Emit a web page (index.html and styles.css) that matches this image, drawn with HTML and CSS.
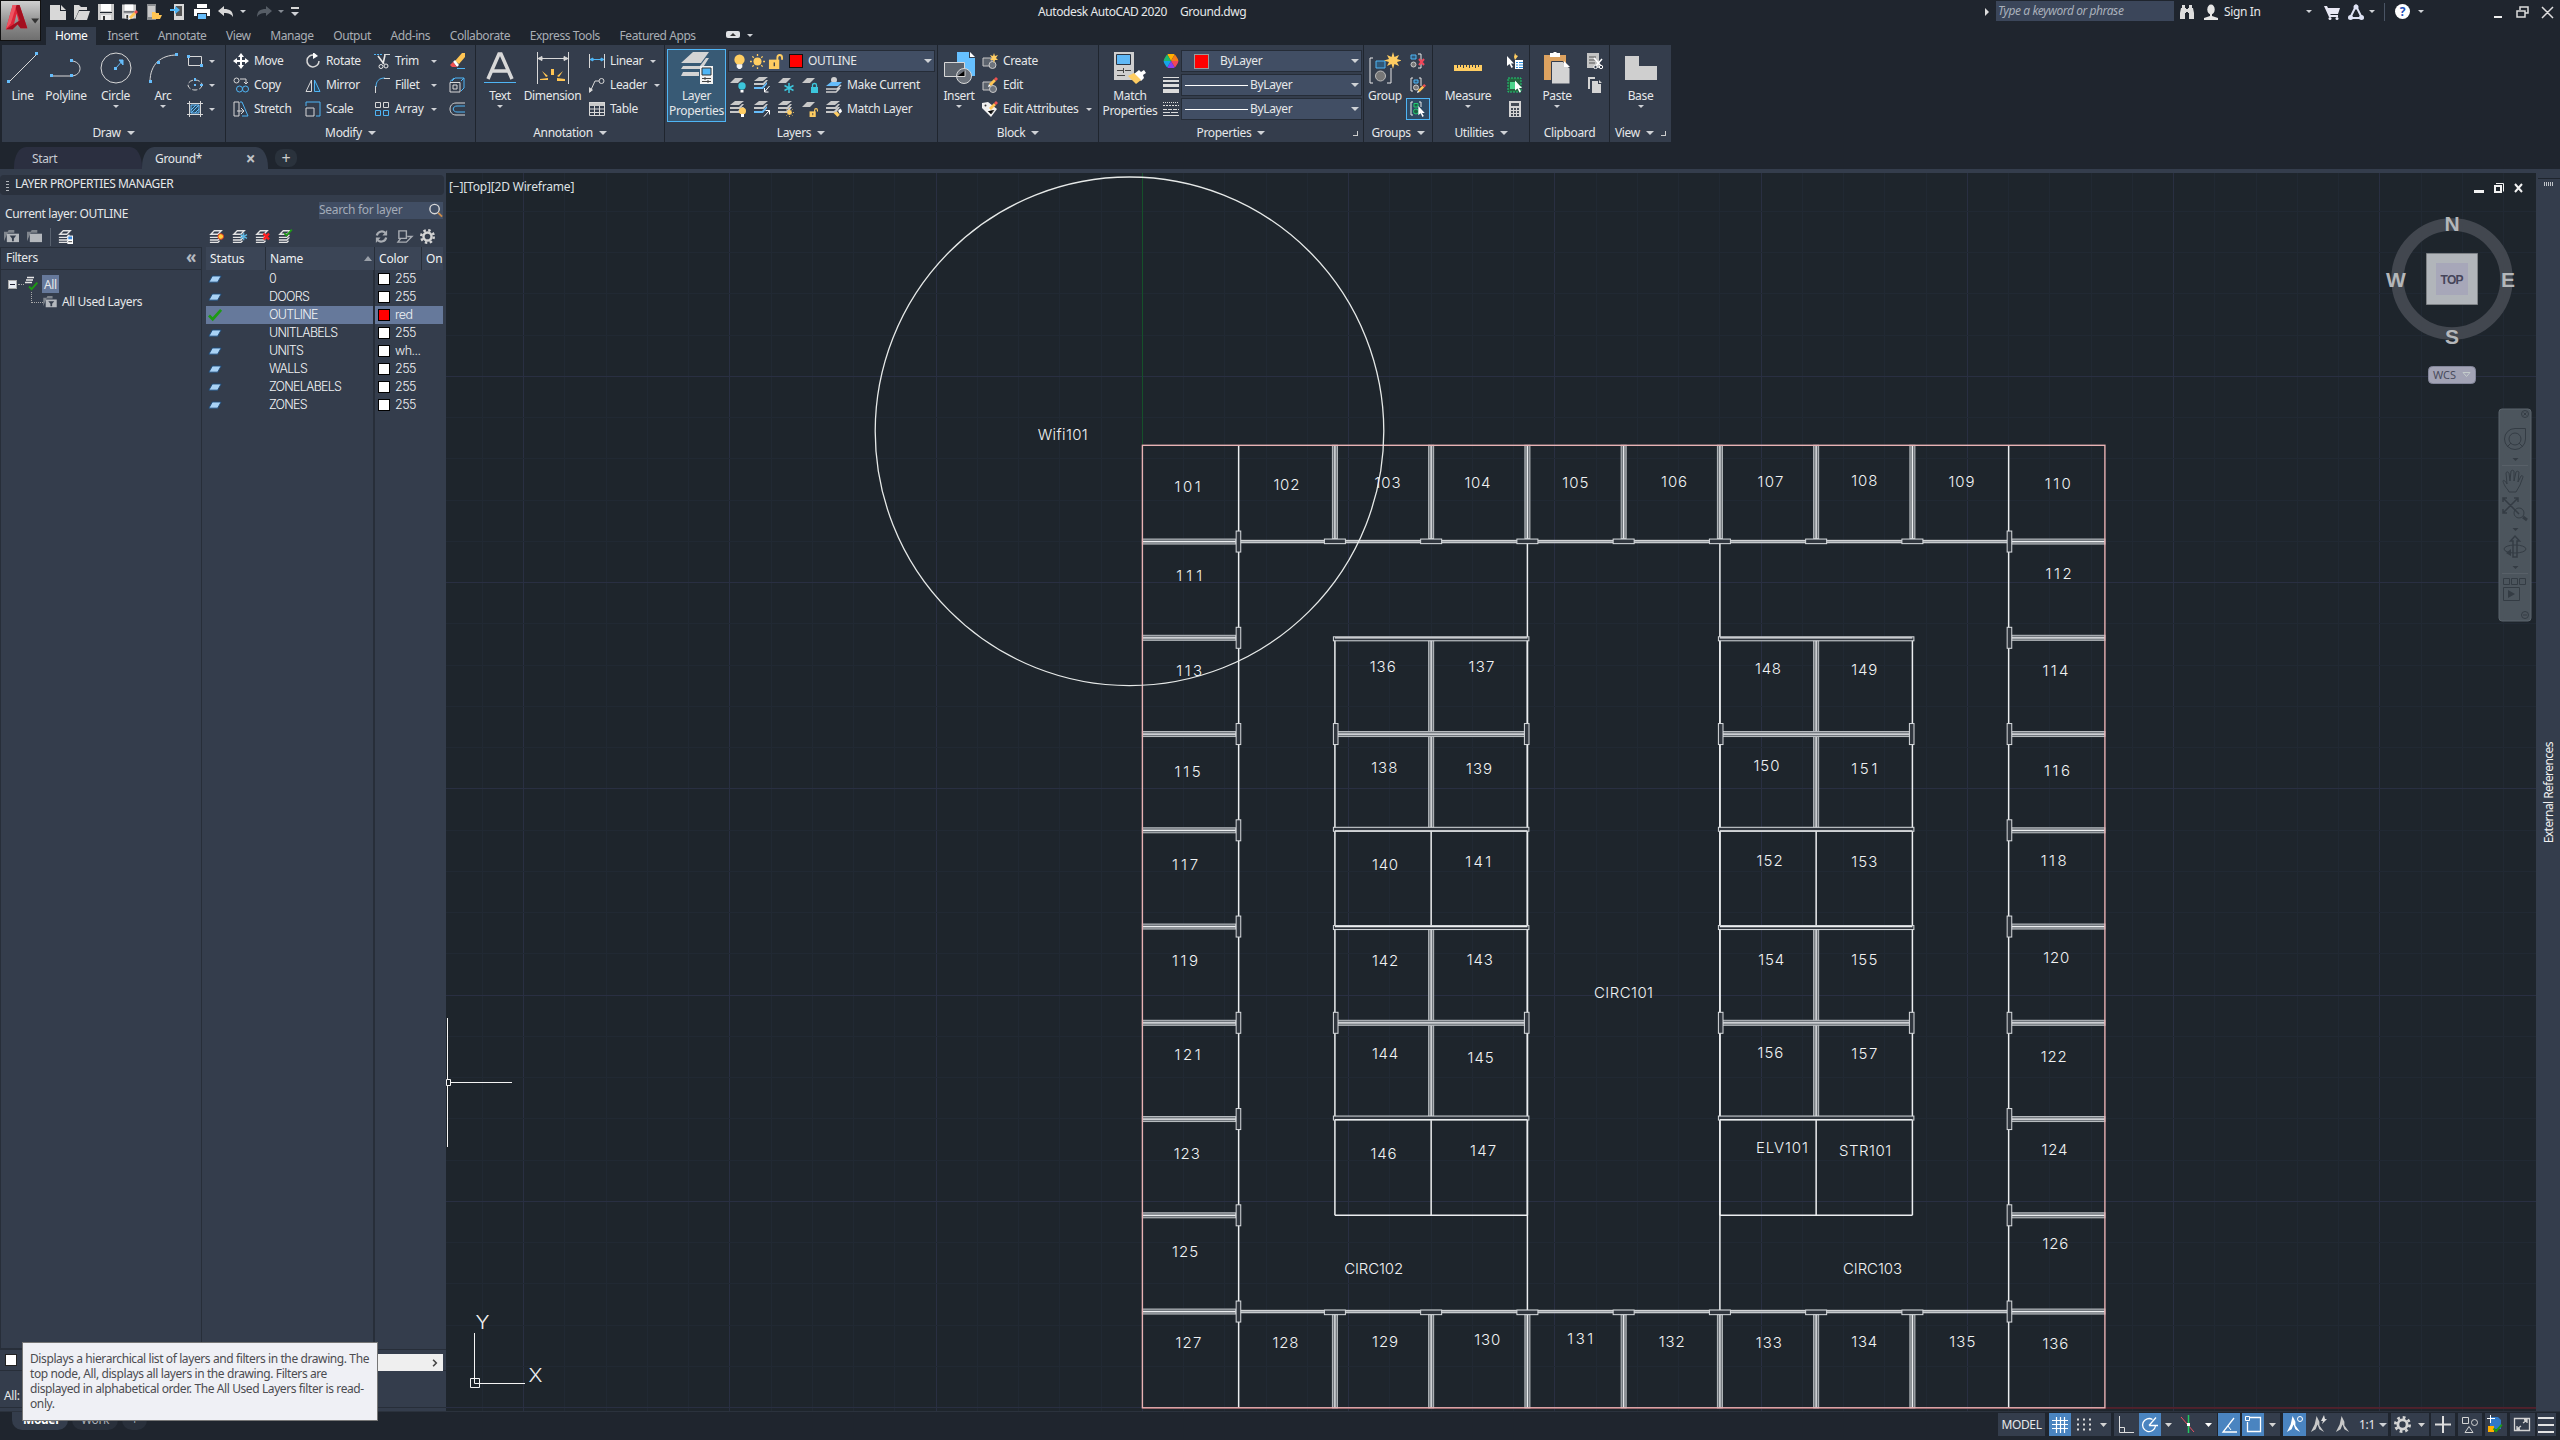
FILE: index.html
```html
<!DOCTYPE html>
<html lang="en">
<head>
<meta charset="utf-8">
<title>Autodesk AutoCAD 2020 - Ground.dwg</title>
<link rel="stylesheet" href="styles.css">
</head>
<body>
<svg class="sprite" aria-hidden="true">
  <symbol id="new" viewBox="0 0 16 16"><path fill="#d8d8d8" d="M0 1h10v6h6v9H0zM11 1l5 5h-5z"/></symbol>
  <symbol id="open" viewBox="0 0 16 16"><path fill="#d8d8d8" d="M0 16V1h5l2 2h6v3H5L2 13zM5 7h11l-3 9H1z"/></symbol>
  <symbol id="save" viewBox="0 0 16 16"><path fill="#c9c9c9" d="M0 0h16v16H0z"/><path fill="#fff" d="M3 0h10v7H3z"/><path fill="#1f252e" d="M2 8h12v1H2z"/><path fill="#eee" d="M3 11h10v5H3z"/><path fill="#333" d="M5 12h2v4H5z"/></symbol>
  <symbol id="pencil" viewBox="0 0 10 10"><path fill="#fff" d="M0 10l1-3 2 2z"/><path fill="#ffc553" d="M1 7l5-5 2 2-5 5z"/><path fill="#f05050" d="M6 2l2-2 2 2-2 2z"/></symbol>
  <symbol id="saveas" viewBox="0 0 16 16"><use href="#save" width="14" height="15"/><use href="#pencil" x="6" y="6" width="10" height="10"/></symbol>
  <symbol id="phoneopen" viewBox="0 0 16 16"><path fill="#8a8d90" d="M1 0h9v16H1z"/><path fill="#c9c9c9" d="M2 2h7v11H2z"/><path fill="#ffc553" d="M6 15V8h3l1 1h3v2h3l-2 4z"/></symbol>
  <symbol id="phonesave" viewBox="0 0 16 16"><path fill="#d8d8d8" d="M4 0h10v16H4z"/><path fill="#555" d="M6 2h6v10H6z"/><path fill="#4fb5f5" d="M0 5h5V2l5 4-5 4V7H0z"/></symbol>
  <symbol id="print" viewBox="0 0 16 16"><path fill="#fff" d="M3 0h10v4H3zM0 5h16v7h-3V9H3v3H0z"/><path fill="#66bdfb" d="M4 10h8v5H4z"/></symbol>
  <symbol id="undo" viewBox="0 0 16 16"><path d="M0 7l6-5v3c6 0 9 2 9 8-2-3-4-4-9-4v3z"/></symbol>
  <symbol id="line" viewBox="0 0 32 32"><path stroke="#d8d8d8" fill="none" d="M2 30L30 2"/><path fill="#66bdfb" d="M0 28h3v3H0zM28 0h3v3h-3z"/></symbol>
  <symbol id="pline" viewBox="0 0 32 32"><path stroke="#d8d8d8" fill="none" d="M1 24h20c12 0 12-15 0-15"/><path fill="#66bdfb" d="M0 22h3v3H0zM20 22h3v3h-3zM20 7h3v3h-3z"/></symbol>
  <symbol id="circle" viewBox="0 0 32 32"><circle cx="16" cy="16" r="15" stroke="#d8d8d8" fill="none"/><path stroke="#66bdfb" fill="#66bdfb" d="M16 16l7-8m-4 0h4v5z"/><path fill="#66bdfb" d="M14 15h3v3h-3z"/></symbol>
  <symbol id="arc" viewBox="0 0 32 32"><path stroke="#d8d8d8" fill="none" d="M3 30C3 12 14 3 30 3"/><path fill="#66bdfb" d="M2 28h3v3H2zM10 9h3v3h-3zM28 1h3v3h-3z"/></symbol>
  <symbol id="rect" viewBox="0 0 16 16"><path stroke="#d8d8d8" fill="none" d="M1.500 3.500h13v9h-13z"/><path fill="#66bdfb" d="M0 2h3v3H0zM13 11h3v3h-3z"/></symbol>
  <symbol id="ellipse" viewBox="0 0 16 16"><ellipse cx="8" cy="8" rx="7" ry="5" stroke="#d8d8d8" stroke-dasharray="5 2" fill="none"/><path fill="#66bdfb" d="M7 7h2v2H7zM7 1h2v3H7zM13 7h3v2h-3z"/></symbol>
  <symbol id="hatch" viewBox="0 0 16 16"><path fill="#294c66" stroke="#66bdfb" d="M4 4h8v8H4zM4 9l5-5M4 12l8-8M8 12l4-4"/><path stroke="#d8d8d8" fill="none" d="M0 2.500h16M0 13.500h16M2.500 0v16M13.500 0v16"/></symbol>
  <symbol id="move" viewBox="0 0 16 16"><path fill="#fff" d="M8 0l3 4H9v3h3V5l4 3-4 3V9H9v3h2l-3 4-3-4h2V9H4v2L0 8l4-3v2h3V4H5z"/></symbol>
  <symbol id="copy" viewBox="0 0 16 16"><g fill="none"><circle cx="3.500" cy="3.500" r="2.500" stroke="#d8d8d8"/><path stroke="#d8d8d8" d="M7 2h6v5m-2-2l2 2 2-2"/><g stroke="#4fb5f5"><circle cx="6.500" cy="12" r="3"/><circle cx="12.500" cy="12" r="3"/></g></g></symbol>
  <symbol id="stretch" viewBox="0 0 16 16"><path stroke="#d8d8d8" fill="none" d="M1 1h5v14H1zM4 10h7m-3-3l3 3-3 3"/><path stroke="#4fb5f5" fill="none" d="M7 1h2l6 14H9"/></symbol>
  <symbol id="rotate" viewBox="0 0 16 16"><path stroke="#d8d8d8" stroke-width="1.500" fill="none" d="M14 8a6 6 0 1 1-5-6"/><path fill="#fff" d="M8-1l5 4-5 3z"/></symbol>
  <symbol id="mirror" viewBox="0 0 16 16"><path stroke="#d8d8d8" fill="none" d="M6.500 3v11.500H1z"/><path stroke="#4fb5f5" fill="#294c66" d="M9.500 3v11.500H15z"/></symbol>
  <symbol id="scale" viewBox="0 0 16 16"><path stroke="#d8d8d8" fill="none" d="M1 7h8v8H1z"/><path stroke="#4fb5f5" fill="none" d="M3 1h12v14h-4M1 5V1h2"/></symbol>
  <symbol id="trim" viewBox="0 0 16 16"><path stroke="#4fb5f5" stroke-dasharray="2 1" d="M0 1.500h8"/><path stroke="#d8d8d8" d="M10 1.500h6"/><path stroke="#e8e8e8" stroke-width="1.600" fill="none" d="M4 3l6 8M11 2L9 11"/><g stroke="#e8e8e8" fill="none"><circle cx="7" cy="13.500" r="2"/><circle cx="12" cy="13" r="2"/></g></symbol>
  <symbol id="fillet" viewBox="0 0 16 16"><path stroke="#4fb5f5" fill="none" d="M2 10C2 4 5 1 11 1"/><path stroke="#d8d8d8" fill="none" d="M1.500 9v7M10 1.500h6"/></symbol>
  <symbol id="array" viewBox="0 0 16 16"><g fill="none"><path stroke="#d8d8d8" d="M1.500 1.500h5v5h-5zM9.500 1.500h5v5h-5z"/><path stroke="#4fb5f5" d="M1.500 9.500h5v5h-5zM9.500 9.500h5v5h-5z"/></g></symbol>
  <symbol id="erase" viewBox="0 0 16 16"><path fill="#ffc553" d="M6 8l7-8h3v4l-6 7z"/><path fill="#fff" d="M4 9l2-2 4 5-2 2z"/><path fill="#f05050" d="M1 12l3-3 4 5H3z"/><path stroke="#4fb5f5" d="M8 15.500h8"/></symbol>
  <symbol id="explode" viewBox="0 0 16 16"><path stroke="#4fb5f5" fill="none" d="M3 4l3-3h9v10l-3 3M1 4.500l4-3.500M12 4l3-3"/><path stroke="#d8d8d8" fill="none" d="M1 5.500h10v9.500H1zM4 8h4v4H4z"/></symbol>
  <symbol id="offset" viewBox="0 0 16 16"><path stroke="#d8d8d8" fill="none" d="M16 2H7C-1 2-1 14 7 14h9"/><path stroke="#4fb5f5" fill="none" d="M16 5H8c-5 0-5 6 0 6h8"/></symbol>
  <symbol id="text" viewBox="0 0 32 32"><path fill="none" stroke="#d8d8d8" stroke-width="3.500" d="M4 27L15 2h2l11 25M8 19h16"/><path stroke="#4fb5f5" d="M0 30.500h32"/></symbol>
  <symbol id="dim" viewBox="0 0 32 32"><path stroke="#d8d8d8" fill="#d8d8d8" d="M.5 0v32M31.500 0v32M1 6.500h30M1 6.500l4-2v4zM31 6.500l-4-2v4z"/><path fill="#ffc553" d="M14 17h3v6h-3zM5 19l6 5-2 1zM26 19l-6 5 2 1zM3 27l8-1v2H3zM20 26l8 1v2h-8z"/></symbol>
  <symbol id="linear" viewBox="0 0 16 16"><path stroke="#d8d8d8" d="M.5 1v14M15.500 1v14"/><path stroke="#4fb5f5" fill="#4fb5f5" d="M1 6.500h14M1 6.500l3-1.500v3zM15 6.500l-3-1.500v3z"/></symbol>
  <symbol id="leader" viewBox="0 0 16 16"><path stroke="#d8d8d8" fill="none" d="M1 15L6 4h4"/><circle cx="12.500" cy="4" r="2.500" stroke="#d8d8d8" fill="none"/><path fill="#d8d8d8" d="M0 16v-6l4 3z"/></symbol>
  <symbol id="table" viewBox="0 0 16 16"><path fill="#c9c9c9" d="M0 1h16v4H0z"/><path stroke="#d8d8d8" fill="none" d="M.5 1.500h15v13H.5zM5.500 5v10M10.500 5v10M0 8h16M0 11.500h16"/></symbol>
  <symbol id="layerprops" viewBox="0 0 32 32"><path fill="#d4d4d4" d="M12 0h16l-8 11H0zM2 14h17l6-8h3l-7 11H0zM2 20h16v4H0z"/><path fill="#f2f2f2" d="M19 14h13v18H19z"/><path fill="#4fb5f5" stroke="#333" d="M21 16h9v7h-9z"/><path stroke="#444" d="M21 26.500h9M21 29.500h9M24 25v3M27 28v3"/></symbol>
  <symbol id="bulb" viewBox="0 0 16 16"><circle cx="8" cy="6" r="5.500" fill="#ffcd62"/><path fill="#f4f4f4" d="M5 11h6v3l-2 2H7l-2-2z"/></symbol>
  <symbol id="sun" viewBox="0 0 16 16"><circle cx="8" cy="8" r="4.300" fill="#ffcd62"/><path stroke="#ffcd62" stroke-width="1.400" d="M8 0v2M8 14v2M0 8h2M14 8h2M2.500 2.500l1.500 1.500M12 12l1.500 1.500M13.500 2.500L12 4M4 12l-1.500 1.500"/></symbol>
  <symbol id="unlock" viewBox="0 0 16 16"><path fill="#ffcd62" d="M1 6h11v10H1z"/><path stroke="#ffcd62" stroke-width="2" fill="none" d="M10 7V4c0-4 5-4 5 0v2"/><path fill="#444" d="M6 9h1.500v4H6z"/></symbol>
  <symbol id="lay-off" viewBox="0 0 16 16"><path fill="#c8c8c8" d="M5 1h8L8 6H0z"/><circle cx="12" cy="9" r="3.700" fill="#3cc6dc"/><path fill="#fff" d="M10.500 13h3v2.500h-3z"/></symbol>
  <symbol id="lay-iso" viewBox="0 0 16 16"><path fill="#c8c8c8" d="M5 0h9L9 4H0zM0 6h9l3-3h2l-4 5H0z"/><path fill="#66bdfb" d="M0 10h8l5-5v2l-4 5H0z"/><path stroke="#fff" fill="none" d="M15.500 9l-5 6m0-4v4h4"/></symbol>
  <symbol id="lay-frz" viewBox="0 0 16 16"><path fill="#c8c8c8" d="M5 1h8L8 6H0z"/><path stroke="#3cc6dc" stroke-width="1.500" d="M11 6v10M6.500 8.500l9 5M6.500 13.500l9-5"/></symbol>
  <symbol id="lay-lock" viewBox="0 0 16 16"><path fill="#c8c8c8" d="M5 1h8L8 6H0z"/><path fill="#3cc6dc" d="M9 10h7v6H9z"/><path stroke="#3cc6dc" stroke-width="1.300" fill="none" d="M10.500 10V8c0-2 4-2 4 0v2"/></symbol>
  <symbol id="lay-cur" viewBox="0 0 16 16"><circle cx="8" cy="3" r="3" fill="#d0d0d0"/><path fill="#66bdfb" d="M5 5h11l-4 4H0z"/><path stroke="#d0d0d0" stroke-width="1.500" fill="none" d="M0 12h11l4-4M0 15h10l4-4"/></symbol>
  <symbol id="lay-on" viewBox="0 0 16 16"><use href="#lay-base" width="16" height="16"/><circle cx="12.500" cy="10" r="3.500" fill="#ffcd62"/><path fill="#fff" d="M11 13h3v3h-3z"/></symbol>
  <symbol id="lay-base" viewBox="0 0 16 16"><path fill="#c8c8c8" d="M5 0h9L9 4H0zM0 6h9l3-3h2l-4 5H0zM0 10h8l4-4h2l-4 6H0z"/></symbol>
  <symbol id="lay-uniso" viewBox="0 0 16 16"><path fill="#c8c8c8" d="M5 0h9L9 4H0zM0 6h9l3-3h2l-4 5H0z"/><path fill="#66bdfb" d="M0 10h8l5-5v2l-4 5H0z"/><path stroke="#fff" fill="none" d="M10 15.500l5.500-6m0 4v-4h-4"/></symbol>
  <symbol id="lay-thaw" viewBox="0 0 16 16"><use href="#lay-base" width="16" height="16"/><use href="#sun" x="7" y="7" width="9" height="9"/></symbol>
  <symbol id="lay-unlock" viewBox="0 0 16 16"><path fill="#c8c8c8" d="M5 1h8L8 6H0z"/><use href="#unlock" x="7" y="7" width="9" height="9"/></symbol>
  <symbol id="brush" viewBox="0 0 16 16"><path fill="#fff" d="M9 5l4-4 2 2 1 3-4 4z"/><path fill="#ffcd62" d="M1 9l6-3 5 6-4 4z"/></symbol>
  <symbol id="lay-match" viewBox="0 0 16 16"><use href="#lay-base" width="16" height="16"/><use href="#brush" x="7" y="7" width="9" height="9"/></symbol>
  <symbol id="insert" viewBox="0 0 32 32"><path fill="#66c0ff" d="M14 0h12v6h6v18H14z"/><path fill="#fff" d="M27 0l5 5h-5z"/><path fill="#5c636d" stroke="#d8d8d8" d="M1.500 10.500h20v14h-20z"/><circle cx="21" cy="24" r="7.500" fill="#6d737c" stroke="#d8d8d8"/><path stroke="#d8d8d8" d="M14 24.500h8v-6"/></symbol>
  <symbol id="create" viewBox="0 0 16 16"><path fill="#5c636d" stroke="#c8c8c8" d="M1 5h9v8H1z"/><circle cx="10.500" cy="12" r="3.500" fill="#6d737c" stroke="#c8c8c8"/><path fill="#ffcd62" d="M12 0l1 3 3-1-2 3 2 2-3 0-1 3-1-3-3 0 2-2-2-3 3 1z"/></symbol>
  <symbol id="editb" viewBox="0 0 16 16"><path fill="#5c636d" stroke="#c8c8c8" d="M1 5h9v8H1z"/><circle cx="11" cy="12" r="3.500" fill="#6d737c" stroke="#c8c8c8"/><use href="#pencil" x="6" y="0" width="10" height="10"/></symbol>
  <symbol id="attr" viewBox="0 0 16 16"><path fill="#f0f0f0" d="M0 2l6-1 9 7-6 8-6-6-3-3z"/><circle cx="3.500" cy="4.500" r="1" fill="#333"/><path stroke="#444" d="M6 10l3 3 3-4"/><use href="#pencil" x="6" y="0" width="10" height="10"/></symbol>
  <symbol id="match" viewBox="0 0 32 32"><path fill="#cfcfcf" d="M0 0h20v28H0z"/><path fill="#5fb8f6" stroke="#2c3440" d="M2.500 2.500h14v10h-14z"/><path stroke="#444" d="M3 18.500h6M11 18.500h6M9.500 16v5M3 23.500h8"/><path fill="#fff" d="M20 22l5-4 2 2 3-2 2 3-3 2 1 3-3 3z"/><path fill="#ffcd62" d="M14 24l6-3 7 7-5 4z"/></symbol>
  <symbol id="wheel" viewBox="0 0 16 16"><path fill="#ffb000" d="M8 8L4 1h8z"/><path fill="#f27a1a" d="M8 8l4-7 4 7z"/><path fill="#f0475a" d="M8 8h8l-4 7z"/><path fill="#8a3df0" d="M8 8l4 7H4z"/><path fill="#16a4e8" d="M8 8l-4 7-4-7z"/><path fill="#1db870" d="M8 8H0l4-7z"/><circle cx="8" cy="8" r="8.500" fill="none" stroke="#343d4c" stroke-width="2"/></symbol>
  <symbol id="lw" viewBox="0 0 16 16"><path fill="#dcdcdc" d="M0 0h16v1H0zM0 3h16v2H0zM0 7h16v3H0zM0 12h16v4H0z"/></symbol>
  <symbol id="lt" viewBox="0 0 16 16"><g stroke="#dcdcdc"><path stroke-dasharray="1 1" d="M0 1.500h16"/><path stroke-dasharray="2 1" d="M0 4.500h16"/><path stroke-dasharray="4 1" d="M0 8.500h16"/><path stroke-dasharray="7 1" d="M0 11.500h16"/><path d="M0 14.500h16"/></g></symbol>
  <symbol id="group" viewBox="0 0 32 32"><path stroke="#e8e8e8" fill="none" d="M4 6H1v25h3M18 31h4V16"/><path stroke="#4fb5f5" fill="#2f5878" d="M7 9h9v7H7z"/><circle cx="11.500" cy="24" r="5" fill="#777" stroke="#bbb"/><path fill="#ffcd62" d="M24 0l1.500 5L30 3l-2 4 5 1.500-5 1.500 2 4-4.500-2L24 17l-1.500-5L18 14l2-4-5-1.500L20 7l-2-4 4.500 2z"/></symbol>
  <symbol id="ungroup" viewBox="0 0 16 16"><path stroke="#4fb5f5" fill="#2f5878" d="M1 2h5v4H1z"/><circle cx="3.500" cy="11.500" r="2.500" fill="#777" stroke="#ccc"/><path stroke="#e8e8e8" fill="none" d="M8 1h3v14H8"/><path stroke="#f0475a" stroke-width="2" d="M9 6l5 6m0-6l-5 6"/></symbol>
  <symbol id="gedit" viewBox="0 0 16 16"><path stroke="#e8e8e8" fill="none" d="M3 1H1v13h2M9 1h2v8"/><path stroke="#4fb5f5" fill="#2f5878" d="M4 3h4v3H4z"/><circle cx="6" cy="10.500" r="2.500" fill="#777" stroke="#ccc"/><use href="#pencil" x="7" y="7" width="9" height="9"/></symbol>
  <symbol id="arrow" viewBox="0 0 8 12"><path fill="#fff" d="M0 0v10l2.500-2 2 4 1.500-1-2-3.500h3z"/></symbol>
  <symbol id="gsel" viewBox="0 0 16 16"><path stroke="#e8e8e8" fill="none" d="M3 1H1v13h2M9 1h2v5"/><path stroke="#23c872" fill="#1d6045" d="M4 2.500h4v3.500H4z"/><circle cx="6" cy="10.500" r="2.500" fill="#1d6045" stroke="#23c872"/><use href="#arrow" x="8" y="5" width="8" height="11"/></symbol>
  <symbol id="measure" viewBox="0 0 32 32"><path fill="#ffcd62" d="M2 13h28v6H2z"/><path stroke="#343d4c" d="M5.500 13v3M8.500 13v2M11.500 13v3M14.500 13v2M17.500 13v3M20.500 13v2M23.500 13v3M26.500 13v2"/></symbol>
  <symbol id="qselect" viewBox="0 0 16 16"><path fill="#fff" d="M8 7h8v9H8z"/><path stroke="#2b8fe0" stroke-dasharray="2 1 4" d="M9 9.500h7M9 12h7M9 14.500h7"/><path fill="#ffcd62" d="M8 0l1 2 2 1-3 4-1-3z"/><use href="#arrow" x="0" y="3" width="8" height="12"/></symbol>
  <symbol id="selall" viewBox="0 0 16 16"><path stroke="#23c872" stroke-dasharray="2 1" fill="#23633f" d="M1 1h13v14H1z"/><path fill="#4bd58b" d="M3 5h7v7H3z"/><use href="#arrow" x="8" y="3" width="8" height="13"/></symbol>
  <symbol id="calc" viewBox="0 0 16 16"><path fill="#d4d4d4" d="M2 0h12v16H2z"/><path fill="#444b55" d="M4 2h8v3H4zM4 7h2v2H4zM7 7h2v2H7zM10 7h2v2h-2zM4 10h2v2H4zM7 10h2v2H7zM10 10h2v2h-2zM4 13h2v2H4zM7 13h2v2H7zM10 13h2v2h-2z"/></symbol>
  <symbol id="paste" viewBox="0 0 32 32"><path fill="#dca260" d="M3 3h22v25H3z"/><path fill="#fff" d="M9 1h3l2-2 2 2h3v4H9z"/><path fill="#d4d4d4" stroke="#343d4c" d="M10.500 9.500H22l7 7V32H10.500z"/><path fill="#fff" d="M23 9l6 6h-6z"/></symbol>
  <symbol id="cut" viewBox="0 0 16 16"><path fill="#c4c4c4" d="M0 0h12v15H0z"/><path stroke="#555" d="M2 4h7M2 7h7M2 10h6"/><path stroke="#fff" stroke-width="1.500" d="M7 5l7 8M15 6l-7 8"/><g fill="#343d4c" stroke="#fff"><circle cx="8.500" cy="14" r="1.700"/><circle cx="14" cy="14" r="1.700"/></g></symbol>
  <symbol id="copyclip" viewBox="0 0 16 16"><path fill="#d4d4d4" d="M1 0h7v2H3v10H1zM5 4h6v3h3v9H5zM12 3l3 3h-3z"/></symbol>
  <symbol id="base" viewBox="0 0 32 32"><path fill="#cfcfcf" d="M0 4h14v10h18v14H0z"/></symbol>
  <symbol id="folder" viewBox="0 0 16 14"><path fill="#7f858d" d="M0 12V2h4l1-2h6v3H4z"/><path fill="#b4b8bd" d="M3 13V4h13v9z"/></symbol>
  <symbol id="folderf" viewBox="0 0 16 14"><use href="#folder" width="16" height="14"/><path fill="#343d4c" d="M6 6h7l-2.500 3v3h-2V9z"/></symbol>
  <symbol id="stk" viewBox="0 0 16 16"><path stroke="#e4e4e4" fill="none" stroke-width="1.500" d="M6 2h8l-4 4H2zM1 9.500h9l3-3M1 12.500h9l3-3M1 15.300h9l2-2"/></symbol>
  <symbol id="para" viewBox="0 0 16 10"><path fill="#a9d2f5" stroke="#1b4c7c" d="M5 1h10l-4 7H1z"/></symbol>
  <symbol id="check" viewBox="0 0 16 14"><path fill="none" stroke="#1d9a14" stroke-width="3" d="M1 7l4 4L14 1"/></symbol>
  <symbol id="gear" viewBox="0 0 16 16"><circle cx="8" cy="8" r="4.300" fill="none" stroke="#d4d4d4" stroke-width="2.600"/><circle cx="8" cy="8" r="6.700" fill="none" stroke="#d4d4d4" stroke-width="2.600" stroke-dasharray="2.630 2.630"/></symbol>
  <symbol id="person" viewBox="0 0 16 16"><ellipse cx="8" cy="5.500" rx="3.700" ry="5" fill="#e6e6e6"/><path fill="#e6e6e6" d="M7 9h2v3l6 2v2H1v-2l6-2z"/></symbol>
  <symbol id="scaleman" viewBox="0 0 18 18"><path d="M8 0l3 6v4l5 7-5-3-2-5-2 5-5 3 4-8z"/></symbol>
</svg>

<header class="titlebar">
  <div class="quick">
    <svg><use href="#new"/></svg><svg><use href="#open"/></svg><svg><use href="#save"/></svg><svg><use href="#saveas"/></svg><svg><use href="#phoneopen"/></svg><svg><use href="#phonesave"/></svg><svg><use href="#print"/></svg><svg class="undo"><use href="#undo"/></svg>
    <i class="dn sm"></i><svg class="redo"><use href="#undo"/></svg><i class="dn sm dim"></i><span class="custom"><i class="dn"></i></span>
  </div>
  <div class="doc-title"><span>Autodesk AutoCAD 2020</span><span>Ground.dwg</span></div>
  <div class="info">
    <i class="rt"></i><div class="keyword">Type a keyword or phrase</div>
    <svg class="binoc" viewBox="0 0 16 16"><path fill="#ddd" d="M3 1h3v3H3zM10 1h3v3h-3zM2 4h5v5H6v6H1V9zM9 4h5l1 5v6h-5V9H9zM7 5h2v3H7z"/></svg>
    <svg class="user"><use href="#person"/></svg><span class="signin">Sign In</span><i class="dn sm"></i>
    <svg class="cart" viewBox="0 0 16 16"><path fill="#e8e8f4" d="M0 2h3l1 2h12l-2 6H6l1 1h7v2H5z"/><circle cx="6" cy="14.500" r="1.500" fill="#e8e8f4"/><circle cx="13" cy="14.500" r="1.500" fill="#e8e8f4"/></svg>
    <svg class="exch" viewBox="0 0 16 16"><path fill="none" stroke="#dfe3f5" stroke-width="2" d="M8 2L2 14h12z"/><g fill="#dfe3f5"><circle cx="8" cy="3" r="2.500"/><circle cx="2.500" cy="13.500" r="2.500"/><circle cx="13.500" cy="13.500" r="2.500"/></g></svg>
    <i class="dn sm"></i><span class="vbar"></span><span class="help">?</span><i class="dn sm"></i>
    <svg class="win" viewBox="0 0 60 16"><path stroke="#eee" stroke-width="2" fill="none" d="M1 13h8"/><path stroke="#ddd" stroke-width="1.500" fill="none" d="M24 7h8v6h-8zM27 6V3h8v6h-3M49 3l11 11M60 3L49 14"/></svg>
  </div>
</header>
<div class="appbtn"><svg viewBox="0 0 40 40"><path fill="#e0263a" d="M5 29L12 4h7l8 24h-7l-4-15-4 16z"/><path fill="#a30f1f" d="M5 29l14-9 8 8h-7l-3-4-5 5zM14 4h5l8 24h-5z"/><path fill="#ee5562" d="M12 4h4L10 23l-5 6z"/><path fill="#333" d="M31 18h8l-4 5z"/></svg></div>

<nav class="tabs"><span class="active">Home</span><span>Insert</span><span>Annotate</span><span>View</span><span>Manage</span><span>Output</span><span>Add-ins</span><span>Collaborate</span><span>Express Tools</span><span>Featured Apps</span><b class="pill"></b><i class="dn sm"></i></nav>

<section class="ribbon">
  <div class="panel p-draw"><div class="body">
    <div class="big" style="width:41px"><svg><use href="#line"/></svg><span>Line</span></div>
    <div class="big" style="width:46px"><svg><use href="#pline"/></svg><span>Polyline</span></div>
    <div class="big" style="width:53px"><svg><use href="#circle"/></svg><span>Circle</span><i class="dn sm"></i></div>
    <div class="big" style="width:42px"><svg><use href="#arc"/></svg><span>Arc</span><i class="dn sm"></i></div>
    <div class="col"><p><svg><use href="#rect"/></svg><i class="dn sm"></i></p><p><svg><use href="#ellipse"/></svg><i class="dn sm"></i></p><p><svg><use href="#hatch"/></svg><i class="dn sm"></i></p></div>
  </div><div class="ptitle">Draw<i class="dn"></i></div></div>

  <div class="panel p-modify"><div class="body">
    <div class="col" style="width:72px"><p><svg><use href="#move"/></svg>Move</p><p><svg><use href="#copy"/></svg>Copy</p><p><svg><use href="#stretch"/></svg>Stretch</p></div>
    <div class="col" style="width:69px"><p><svg><use href="#rotate"/></svg>Rotate</p><p><svg><use href="#mirror"/></svg>Mirror</p><p><svg><use href="#scale"/></svg>Scale</p></div>
    <div class="col spread" style="width:63px"><p><svg><use href="#trim"/></svg>Trim<i class="dn sm"></i></p><p><svg><use href="#fillet"/></svg>Fillet<i class="dn sm"></i></p><p><svg><use href="#array"/></svg>Array<i class="dn sm"></i></p></div>
    <div class="col last"><p><svg><use href="#erase"/></svg></p><p><svg><use href="#explode"/></svg></p><p><svg><use href="#offset"/></svg></p></div>
  </div><div class="ptitle">Modify<i class="dn"></i></div></div>

  <div class="panel p-anno"><div class="body">
    <div class="big" style="width:48px"><svg><use href="#text"/></svg><span>Text</span><i class="dn sm"></i></div>
    <div class="big" style="width:57px"><svg><use href="#dim"/></svg><span>Dimension</span></div>
    <div class="col"><p><svg><use href="#linear"/></svg>Linear<i class="dn sm"></i></p><p><svg><use href="#leader"/></svg>Leader<i class="dn sm"></i></p><p><svg><use href="#table"/></svg>Table</p></div>
  </div><div class="ptitle">Annotation<i class="dn"></i></div></div>

  <div class="panel p-layers"><div class="body">
    <div class="big lit"><svg><use href="#layerprops"/></svg><span>Layer<br>Properties</span></div>
    <div class="col">
      <div class="combo"><svg><use href="#bulb"/></svg><svg><use href="#sun"/></svg><svg><use href="#unlock"/></svg><b class="red"></b>OUTLINE<i class="dn"></i></div>
      <p><svg><use href="#lay-off"/></svg><svg><use href="#lay-iso"/></svg><svg><use href="#lay-frz"/></svg><svg><use href="#lay-lock"/></svg><svg><use href="#lay-cur"/></svg><span>Make Current</span></p>
      <p><svg><use href="#lay-on"/></svg><svg><use href="#lay-uniso"/></svg><svg><use href="#lay-thaw"/></svg><svg><use href="#lay-unlock"/></svg><svg><use href="#lay-match"/></svg><span>Match Layer</span></p>
    </div>
  </div><div class="ptitle">Layers<i class="dn"></i></div></div>

  <div class="panel p-block"><div class="body">
    <div class="big" style="width:42px"><svg><use href="#insert"/></svg><span>Insert</span><i class="dn sm"></i></div>
    <div class="col"><p><svg><use href="#create"/></svg>Create</p><p><svg><use href="#editb"/></svg>Edit</p><p><svg><use href="#attr"/></svg>Edit Attributes<i class="dn sm"></i></p></div>
  </div><div class="ptitle">Block<i class="dn"></i></div></div>

  <div class="panel p-props"><div class="body">
    <div class="big" style="width:62px"><svg><use href="#match"/></svg><span>Match<br>Properties</span></div>
    <div class="col"><p><svg><use href="#wheel"/></svg></p><p><svg><use href="#lw"/></svg></p><p><svg><use href="#lt"/></svg></p></div>
    <div class="col combos"><div class="combo first"><b class="red"></b>ByLayer<i class="dn"></i></div><div class="combo"><b class="rule"></b>ByLayer<i class="dn"></i></div><div class="combo"><b class="rule"></b>ByLayer<i class="dn"></i></div></div>
  </div><div class="ptitle">Properties<i class="dn"></i><em class="launch"></em></div></div>

  <div class="panel p-groups"><div class="body">
    <div class="big" style="width:42px"><svg><use href="#group"/></svg><span>Group</span></div>
    <div class="col"><p><svg><use href="#ungroup"/></svg></p><p><svg><use href="#gedit"/></svg></p><p class="on"><svg><use href="#gsel"/></svg></p></div>
  </div><div class="ptitle">Groups<i class="dn"></i></div></div>

  <div class="panel p-util"><div class="body">
    <div class="big" style="width:70px"><svg><use href="#measure"/></svg><span>Measure</span><i class="dn sm"></i></div>
    <div class="col"><p><svg><use href="#qselect"/></svg></p><p><svg><use href="#selall"/></svg></p><p><svg><use href="#calc"/></svg></p></div>
  </div><div class="ptitle">Utilities<i class="dn"></i></div></div>

  <div class="panel p-clip"><div class="body">
    <div class="big" style="width:54px"><svg><use href="#paste"/></svg><span>Paste</span><i class="dn sm"></i></div>
    <div class="col"><p><svg><use href="#cut"/></svg></p><p><svg><use href="#copyclip"/></svg></p></div>
  </div><div class="ptitle">Clipboard</div></div>

  <div class="panel p-view"><div class="body">
    <div class="big" style="width:61px"><svg><use href="#base"/></svg><span>Base</span><i class="dn sm"></i></div>
  </div><div class="ptitle">View<i class="dn"></i><em class="launch"></em></div></div>
</section>

<div class="filetabs"><span class="ft start">Start</span><span class="ft ground">Ground*<b>×</b></span><span class="plus">+</span></div>

<main class="work">
  <aside class="lpm">
    <div class="lpm-title">LAYER PROPERTIES MANAGER</div>
    <div class="current"><span>Current layer: OUTLINE</span><div class="search">Search for layer<svg viewBox="0 0 16 16"><circle cx="7" cy="7" r="5" fill="none" stroke="#d8d8d8" stroke-width="1.500"/><path stroke="#c98a4a" stroke-width="2" d="M11 11l4 4"/></svg></div></div>
    <div class="tools">
      <svg><use href="#folderf"/></svg><svg><use href="#folder"/></svg><u></u><svg viewBox="0 0 16 16"><use href="#stk" width="15" height="15"/><path fill="#fff" d="M10 7h6v9h-6z"/><path fill="#3a87d8" d="M11 8h4v3h-4z"/><path stroke="#444" d="M11 13.500h4"/></svg>
      <svg class="gap" viewBox="0 0 16 16"><use href="#stk" width="15" height="15"/><circle cx="12.500" cy="8" r="3" fill="#ffcd3c" stroke="#e03020"/></svg>
      <svg viewBox="0 0 16 16"><use href="#stk" width="15" height="15"/><path stroke="#5db9e6" stroke-width="1.300" d="M12.500 4v8M9 6l7 4M9 10l7-4"/></svg>
      <svg viewBox="0 0 16 16"><use href="#stk" width="15" height="15"/><path stroke="#ff1c1c" stroke-width="2.500" d="M9 5l6 6m0-6l-6 6"/></svg>
      <svg viewBox="0 0 16 16"><use href="#stk" width="15" height="15"/><use href="#check" x="6" y="0" width="10" height="9"/></svg>
      <svg class="gap2" viewBox="0 0 16 16"><path fill="none" stroke="#a9adb3" stroke-width="2.400" d="M3 7a5.500 5.500 0 0 1 9-3M13 9a5.500 5.500 0 0 1-9 3"/><path fill="#a9adb3" d="M14 1v6H9zM2 15V9h5z"/></svg>
      <svg viewBox="0 0 16 16"><path fill="none" stroke="#a9adb3" stroke-width="1.500" d="M2 2h8v8H2zM4 10l-3 4h9l6-6h-5"/></svg>
      <svg viewBox="0 0 16 16"><use href="#gear"/></svg>
    </div>
    <div class="lists">
      <div class="filters">
        <div class="fhead">Filters<span>«</span></div>
        <div class="node"><b class="minus"></b><svg viewBox="0 0 16 16"><path stroke="#e8e8e8" stroke-width="1.500" d="M3 1.500h7M2 4h7M1 6.500h7"/><use href="#check" x="4" y="6" width="11" height="9"/></svg><span class="sel">All</span></div>
        <div class="node child"><svg><use href="#folderf"/></svg><span>All Used Layers</span></div>
      </div>
      <div class="grid">
        <div class="row head"><span>Status</span><span>Name<i class="up"></i></span><span>Color</span><span>On</span></div>
        <div class="row"><span><svg><use href="#para"/></svg></span><span>0</span><span><b></b>255</span><span></span></div>
        <div class="row"><span><svg><use href="#para"/></svg></span><span>DOORS</span><span><b></b>255</span><span></span></div>
        <div class="row cur"><span><svg class="ck"><use href="#check"/></svg></span><span>OUTLINE</span><span><b class="r"></b>red</span><span></span></div>
        <div class="row"><span><svg><use href="#para"/></svg></span><span>UNITLABELS</span><span><b></b>255</span><span></span></div>
        <div class="row"><span><svg><use href="#para"/></svg></span><span>UNITS</span><span><b></b>wh...</span><span></span></div>
        <div class="row"><span><svg><use href="#para"/></svg></span><span>WALLS</span><span><b></b>255</span><span></span></div>
        <div class="row"><span><svg><use href="#para"/></svg></span><span>ZONELABELS</span><span><b></b>255</span><span></span></div>
        <div class="row"><span><svg><use href="#para"/></svg></span><span>ZONES</span><span><b></b>255</span><span></span></div>
        <div class="row fill"><span></span><span></span><span></span><span></span></div>
      </div>
    </div>
    <div class="lpm-foot"><b></b><div class="hscroll"><svg viewBox="0 0 8 10"><path fill="none" stroke="#444" stroke-width="2" d="M1 1l4 4-4 4"/></svg></div></div>
    <div class="lpm-count">All:</div>
  </aside>

  <svg class="canvas" id="canvas" viewBox="446 173 2090 1238" width="2090" height="1238">
    <g id="grid"></g>
    <path class="yaxis" d="M1142.500 173V445"/><path class="xaxis" d="M1142 1408H2536"/>
    <g id="plan"></g>
    <circle cx="1129.500" cy="431.300" r="254.300" class="wifi"/>
    <g id="labels" class="labels"></g>
    <text x="449" y="191" class="vp" textLength="125">[−][Top][2D Wireframe]</text>
    <g class="cursor"><path d="M447.500 1018V1079M447.500 1086V1147M451 1082.500H512"/><path d="M446.500 1079.500h4v6h-4z"/></g>
    <g class="cursor"><path d="M474.500 1333V1383.500H525M470.500 1378.500h9v9h-9z"/></g>
    <g class="ucs"><text x="475.500" y="1328.500" textLength="14" lengthAdjust="spacingAndGlyphs">Y</text><text x="528.500" y="1381.500" textLength="14" lengthAdjust="spacingAndGlyphs">X</text></g>
    <g class="cube">
      <circle cx="2452" cy="279" r="54.500" class="ring"/>
      <path class="face" d="M2426.500 253.500h51v51h-51z"/><path class="inner" d="M2436 263h32v32h-32z"/>
      <text class="top" x="2452" y="283.500" textLength="23">TOP</text>
      <text x="2452" y="231">N</text><text x="2452" y="343.500">S</text><text x="2396" y="287">W</text><text x="2508" y="287">E</text>
      <rect x="2428.500" y="366.500" width="47" height="17" rx="4" class="wcs"/><text class="wcst" x="2444.500" y="378.500">WCS</text><path fill="none" stroke="#c4cccc" d="M2463 372.500h7l-3.500 4z"/>
    </g>
    <g fill="#f2f2f2"><path d="M2474 190h10v3h-10z"/><path fill="none" stroke="#f2f2f2" stroke-width="2" d="M2495 186h6v6h-6z"/><path fill="none" stroke="#f2f2f2" d="M2496 183.500h7.500v8"/><path fill="none" stroke="#f2f2f2" stroke-width="2" d="M2515 184l7 8m0-8l-7 8"/></g>
    <g class="nav">
      <rect x="2499" y="409" width="32" height="212" rx="3"/>
      <g fill="none" stroke="#343c44"><circle cx="2525" cy="414" r="3.500"/><path d="M2523.500 412.500l3 3m0-3l-3 3"/>
      <path d="M2515 428.500h10.500V439a10.500 10.500 0 1 1-10.500-10.500z"/><circle cx="2515" cy="439" r="6"/><path d="M2511 443l-4 4M2519 443l4 4"/>
      <path d="M2508 490c-3-3-5-8-5-9s2-1 4 3l-1-11c1-2 2-1 3 0l1 8 1-10c1-1 2-1 3 0v10l2-9c1-1 2-1 3 0l-1 10 3-6c1-1 2 0 2 1l-3 8-4 7h-7z"/>
      <path stroke-width="1.500" d="M2503 498l16 16M2518 498l-15 15M2503 502v-4h4M2514 498h4v4M2503 509v4h4"/><circle cx="2519" cy="513" r="5"/><path stroke-width="3" d="M2523 517l4 3"/>
      <ellipse cx="2515" cy="549" rx="11" ry="4"/><path stroke-width="1.500" d="M2513 557v-16h-2.500l4.500-5 4.500 5h-2.500v16z"/>
      <path d="M2503.500 578.500h6v6h-6zM2511.500 578.500h6v6h-6zM2519.500 578.500h6v6h-6zM2503.500 587.500h16v13h-16z"/><circle cx="2525" cy="615" r="3.500"/><path d="M2523 615h4"/></g>
      <path fill="#343c44" d="M2512.500 458h6l-3 3zM2512.500 528h6l-3 3zM2512.500 566h6l-3 3zM2508 590l7 4-7 4zM2506 553l5-4v7z"/><path stroke="#586068" d="M2502 465.500h26M2502 573.500h26"/>
    </g>
  </svg>
  <aside class="xref"><i></i><span>External References</span></aside>
  <div class="tip">Displays a hierarchical list of layers and filters in the drawing. The top node, All, displays all layers in the drawing. Filters are displayed in alphabetical order. The All Used Layers filter is read-only.</div>
</main>

<footer class="status">
  <div class="mtabs"><span class="m on">Model</span><span class="m">Work</span><span class="m">+</span></div>
  <div class="st">
    <span class="model">MODEL</span>
    <svg class="blue" style="width:22px;margin-left:4px" viewBox="0 0 22 23"><path stroke="#fff" stroke-width="1.200" d="M3 7.500h16M3 11.500h16M3 15.500h16M7.500 4v16M11.500 4v16M15.500 4v16"/></svg>
    <svg style="width:40px" viewBox="0 0 40 23"><path stroke="#ddd" stroke-width="2" stroke-dasharray="2 4" d="M6 6.500h15M6 11.500h15M6 16.500h15"/><path fill="#d4d4d4" d="M29 10h7l-3.500 4z"/></svg>
    <svg style="width:25px;margin-left:3px" viewBox="0 0 25 23"><path stroke="#ddd" fill="none" d="M5.500 3v16.500H20M5 14.500h5.500V20"/></svg>
    <svg class="blue" style="width:22px" viewBox="0 0 22 23"><path stroke="#fff" fill="none" stroke-width="1.300" d="M13.500 6.500a6.500 6.500 0 1 0 3 6.500M10 12.500l7-8M10 12.500h9"/></svg>
    <svg style="width:16px" viewBox="0 0 16 23"><path fill="#d4d4d4" d="M4 10h7l-3.500 4z"/></svg>
    <svg style="width:40px" viewBox="0 0 40 23"><path stroke="#f05060" d="M4 4l13 15"/><path stroke="#22c860" stroke-width="1.500" d="M11.500 2v18"/><path fill="#fff" d="M10 10h3v3h-3zM28 10h7l-3.500 4z"/></svg>
    <svg class="blue" style="width:22px;margin-left:1px" viewBox="0 0 22 23"><path stroke="#fff" fill="none" stroke-width="1.300" d="M19 19H5L16 5"/><path stroke="#fff" d="M10 13l3 4"/></svg>
    <svg class="blue" style="width:22px;margin-left:2px" viewBox="0 0 22 23"><path stroke="#fff" fill="none" stroke-width="1.300" d="M8 4.500h10.500v14H5.500V9"/><path fill="none" stroke="#fff" d="M3.500 3.500h4v4h-4z"/></svg>
    <svg style="width:16px" viewBox="0 0 16 23"><path fill="#d4d4d4" d="M5 10h7l-3.500 4z"/></svg>
    <svg class="blue" style="width:23px;margin-left:3px" viewBox="0 0 23 23"><use href="#scaleman" x="2" y="3" width="17" height="17" fill="#fff"/><circle cx="17" cy="6" r="2.500" fill="none" stroke="#fff"/></svg>
    <svg style="width:25px" viewBox="0 0 25 23"><use href="#scaleman" x="3" y="3" width="17" height="17" fill="#c8c8c8"/><path fill="#ddd" d="M18 2l-3 6h2l-1 3 5-5h-2z"/></svg>
    <svg style="width:23px" viewBox="0 0 23 23"><use href="#scaleman" x="3" y="3" width="17" height="17" fill="#c8c8c8"/></svg>
    <span class="ratio">1:1<i class="dn"></i></span>
    <svg style="width:38px;margin-left:3px" viewBox="0 0 38 23"><use href="#gear" x="3" y="3" width="17" height="17"/><path fill="#d4d4d4" d="M27 10h7l-3.500 4z"/></svg>
    <svg style="width:24px;margin-left:2px" viewBox="0 0 24 23"><path stroke="#ddd" stroke-width="2" d="M12 3v17M4 11.500h16"/></svg>
    <svg style="width:24px;margin-left:3px" viewBox="0 0 24 23"><path fill="none" stroke="#d4d4d4" d="M4.500 4.500h6v6h-6zM11 13.500l4 6H7z"/><circle cx="16.500" cy="9.500" r="3" fill="none" stroke="#d4d4d4"/></svg>
    <svg style="width:22px;margin-left:3px" viewBox="0 0 22 23"><path fill="#2f78c8" d="M5 4h8l3 3v9H5z"/><path fill="#ffae00" d="M3 13h6v6H3z"/><path stroke="#fff" d="M2 5.500h8M5.500 2v8"/><use href="#check" x="7" y="11" width="12" height="9"/></svg>
    <svg style="width:25px;margin-left:3px" viewBox="0 0 25 23"><path fill="none" stroke="#d4d4d4" stroke-width="1.300" d="M4.500 5.500h15v12h-15zM13 10l4-3m-3 0h3v3M11 13l-4 3m0-3v3h3"/></svg>
    <svg style="width:19px;margin-left:2px" viewBox="0 0 19 23"><path stroke="#e4e4e4" stroke-width="2" d="M1 5h16M1 12h16M1 19h16"/></svg>
  </div>
</footer>
<script src="plan.js"></script>
</body>
</html>
```
FILE: styles.css
```css
* { box-sizing: border-box; }
body {
  margin: 0; width: 2560px; height: 1440px; overflow: hidden; position: relative;
  display: flex; flex-direction: column;
  background: #1f252e; color: #e6e8ea;
  font: 12px/16px "Noto Sans", "Open Sans", sans-serif; letter-spacing: -0.35px;
}
p { margin: 0; }
svg { display: block; flex: none; overflow: visible; }
.sprite { position: absolute; width: 0; height: 0; }
i.dn { flex: none; width: 0; height: 0; border: 4px solid transparent; border-top-color: #cfd2d6; border-bottom: 0; }
i.dn.sm { border-width: 3px; border-bottom: 0; }
i.dn.dim { border-top-color: #858b93; }

.titlebar { height: 26px; flex: none; display: flex; padding-left: 50px; }
.quick { width: 988px; height: 23px; display: flex; align-items: center; gap: 8px; }
.quick svg { width: 16px; height: 16px; }
.undo { fill: #d8d8d8; }
.quick .redo { fill: #565d66; transform: scaleX(-1); margin-left: -1px; }
.quick .sm { margin: 0 3px 0 -2px; }
.custom { border-top: 2px solid #d8d8d8; padding-top: 3px; margin-left: -4px; width: 8px; height: 9px; flex: none; }
.custom i { display: block; }
.doc-title { width: 938px; display: flex; gap: 13px; padding-top: 4px; letter-spacing: -0.4px; }
.info { display: flex; height: 23px; align-items: center; flex: 1; margin-left: 9px; }
.rt { border: 4px solid transparent; border-left-color: #ddd; border-right: 0; }
.keyword { margin: 0 5px 2px 7px; width: 178px; height: 20px; padding: 2px 2px; background: #3b465a; color: #a9b0ba; font-style: italic; letter-spacing: -0.42px; }
.binoc, .cart, .exch, .user { width: 16px; height: 16px; }
.user { margin-left: 8px; }
.signin { width: 82px; margin-left: 5px; }
.cart { margin-left: 12px; }
.exch { margin: 0 5px 0 8px; }
.vbar { width: 1px; height: 18px; background: #4a5464; margin: 0 10px 0 9px; }
.help { width: 15px; height: 15px; border-radius: 50%; background: #fff; color: #1d50b8; font-weight: bold; line-height: 15px; text-align: center; margin-right: 8px; }
.win { width: 60px; height: 16px; margin-left: 69px; }
.appbtn { position: absolute; left: 0; top: 0; width: 41px; height: 41px; border: 1px solid #111; background: linear-gradient(#cfcfcf, #8a8a8a 60%, #6f6f6f); }
.appbtn svg { width: 39px; height: 39px; }

.tabs { height: 19px; flex: none; display: flex; align-items: center; padding-left: 46px; color: #a9aeb5; letter-spacing: -0.42px; line-height: 15px; }
.tabs span { margin-right: 19.600px; }
.tabs .active { background: #343d4c; color: #fff; padding: 1px 9px; margin-right: 11px; height: 18px; }
.pill { width: 14px; height: 7px; border-radius: 2px; background: #dfe1e4; margin: 0 7px 2px 11px; position: relative; }
.pill::after { content: ""; position: absolute; left: 4px; top: 2px; border: 3px solid transparent; border-top: 0; border-bottom-color: #333; }

.ribbon { display: flex; gap: 1px; padding-left: 2px; height: 97px; flex: none; }
.panel { background: #343d4c; display: flex; flex-direction: column; flex: none; }
.body { height: 78px; padding-top: 4px; display: flex; }
.ptitle { height: 19px; display: flex; align-items: center; justify-content: center; gap: 6px; position: relative; }
.launch { position: absolute; right: 5px; top: 8px; width: 5px; height: 5px; border: 1px solid #ccc; border-top: 0; border-left: 0; }
.big { display: flex; flex-direction: column; align-items: center; text-align: center; line-height: 15px; flex: none; white-space: nowrap; }
.big svg { width: 32px; height: 32px; margin: 3px 0 4px; }
.big .sm { margin-top: 2px; }
.col { flex: none; }
.col p { height: 24px; display: flex; align-items: center; gap: 5px; white-space: nowrap; }
.col p svg { width: 16px; height: 16px; }
.combo { height: 22px; margin-bottom: 2px; border: 1px solid #252c37; background: #414e64; display: flex; align-items: center; }
.combo i { margin-left: auto; margin-right: 2px; }
.red { background: #f00; border: 1px solid #111; width: 14px; height: 14px; }
.p-draw { width: 223px; } .p-draw .col { padding-left: 3px; } .p-draw .col p { gap: 6px; }
.p-modify { width: 249px; } .p-modify .body { padding-left: 7px; } .p-modify .last { padding-left: 12px; }
.spread p i { margin-left: auto; }
.p-anno { width: 188px; } .p-anno .col { padding-left: 8px; } .p-anno .col i { margin-left: 2px; }
.p-layers { width: 272px; } .p-layers .col { padding: 1px 0 0 2px; width: 209px; }
.p-layers p { padding-left: 2px; } .p-layers .col p { gap: 8px; } .p-layers .col p span { margin-left: -3px; }
.p-layers .combo { gap: 3px; padding-left: 3px; margin-bottom: 1px; }
.p-layers .combo svg { width: 15px; height: 15px; }
.p-layers .combo .red { margin: 0 2px 0 3px; }
.lit { margin-left: 2px; width: 59px; height: 73px; border: 1px solid #4fb5f5; background: #385a75; }
.lit svg { margin-top: 2px; }
.p-block { width: 160px; } .p-block .col { padding-left: 2px; } .p-block .col i { margin-left: 3px; }
.p-props { width: 264px; } .p-props .col { padding-left: 2px; } .p-props .combos { width: 183px; padding: 1px 0 0 2px; }
.p-props .combo { margin-bottom: 2px; } .p-props .first { padding-left: 12px; gap: 11px; } .first .red { border-color: #9a9a9a; height: 15px; width: 15px; }
.rule { width: 63px; height: 1px; background: #fff; margin: 0 2px 0 3px; }
.p-groups { width: 68px; } .p-groups .col p { width: 24px; justify-content: center; }
.p-groups .on { border: 1px solid #4fb5f5; background: #2f4a64; height: 22px !important; margin-top: 1px; }
.p-util { width: 96px; } .p-util .col { padding-left: 4px; }
.p-clip { width: 79px; } .p-clip .col { padding-left: 3px; }
.p-view { width: 61px; } .p-view .ptitle { justify-content: flex-start; padding-left: 5px; }

.filetabs { height: 22px; margin-top: 5px; flex: none; display: flex; padding-left: 14px; }
.ft { height: 22px; padding: 4px 0 0 18px; border-radius: 12px 12px 0 0 / 20px 20px 0 0; }
.start { width: 128px; background: #2b2f40; color: #c8cbd2; }
.ground { width: 126px; padding-left: 13px; background: #343d4c; display: flex; }
.ground b { margin-left: auto; margin-right: 13px; font-size: 17px; line-height: 15px; color: #c0c4c8; }
.plus { width: 22px; text-align: center; margin: 2px 0 2px 7px; background: #2a323c; border-radius: 8px; font-size: 16px; line-height: 18px; color: #ccc; }

.work { height: 1242px; flex: none; display: flex; border-top: 4px solid #343d4c; background: #343d4c; position: relative; }
.canvas { background: #1e252c; overflow: hidden; }
.lpm { width: 446px; flex: none; display: flex; flex-direction: column; padding-top: 2px; }
.lpm-title { height: 20px; width: 444px; background: #2a313d; border-radius: 4px; padding: 1px 15px; position: relative; letter-spacing: -0.4px; }
.lpm-title::before { content: ""; position: absolute; left: 6px; top: 6px; width: 3px; height: 10px; background: repeating-linear-gradient(#b0b4ba 0 1px, transparent 1px 3px); }
.current { height: 31px; display: flex; justify-content: space-between; padding: 11px 3px 0 5px; letter-spacing: -0.38px; }
.search { width: 124px; height: 17px; margin-top: -4px; background: #414e64; color: #a3abb8; line-height: 16px; display: flex; justify-content: space-between; letter-spacing: -0.3px; }
.search svg { width: 15px; height: 16px; }
.tools { height: 21px; display: flex; align-items: center; gap: 9px; padding-left: 4px; }
.tools svg { width: 15px; height: 15px; margin-right: -1px; }
.tools u { width: 1px; height: 18px; background: #59626f; margin-right: -2px; }
.tools .gap { margin-left: 128px; }
.tools .gap2 { margin-left: 73px; }
.lists { height: 1102px; display: flex; }
.filters { width: 202px; border: 1px solid #272e39; margin-right: 4px; }
.fhead { height: 22px; border-bottom: 1px solid #272e39; padding: 2px 5px; display: flex; justify-content: space-between; }
.fhead span { font-size: 17px; font-weight: bold; line-height: 14px; color: #b5bac1; }
.node { height: 18px; display: flex; align-items: center; margin-top: 5px; padding-left: 7px; }
.minus { width: 9px; height: 9px; background: #e8ecf2; border: 1px solid #aaa; margin-right: 7px; position: relative; }
.minus::before { content: ""; position: absolute; left: 1px; top: 3px; width: 5px; height: 1px; background: #223; }
.minus::after { content: ""; position: absolute; left: 9px; top: 3px; width: 6px; border-top: 1px dotted #aaa; }
.node svg { width: 16px; height: 16px; margin-right: 2px; }
.sel { background: #66799b; padding: 0 2px; height: 18px; line-height: 19px; }
.node.child { margin-top: 0; padding-left: 42px; position: relative; }
.child::before { content: ""; position: absolute; left: 30px; top: -1px; width: 11px; height: 10px; border: dotted #aaa; border-width: 0 0 1px 1px; }
.child svg { width: 14px; height: 12px; margin-right: 5px; }
.grid { width: 237px; display: flex; flex-direction: column; }
.row { height: 18px; flex: none; display: grid; grid-template-columns: 60px 109px 47px 21px; font: 300 12.500px/18px Inter, "Noto Sans", sans-serif; letter-spacing: -0.2px; overflow: hidden; color: #f0f2f4; }
.row span { display: flex; align-items: center; overflow: hidden; white-space: nowrap; border-right: 1px solid transparent; }
.row span:nth-child(1) { padding-left: 2px; } .row span:nth-child(2) { padding-left: 3px; letter-spacing: -0.75px; }
.row span:nth-child(2) { border-right: 2px solid #272e39; } .row span:nth-child(3) { padding-left: 3px; letter-spacing: -0.5px; }
.row svg { width: 14px; height: 9px; }
.row svg.ck { width: 15px; height: 13px; }
.row b { width: 12px; height: 12px; background: #fff; border: 1px solid #000; margin-right: 5px; flex: none; }
.row .r { background: #f00; }
.head.row { height: 23px; background: #3b4556; font: 12px/22px "Noto Sans", sans-serif; }
.head.row span { border-right: 1px solid #272e39; padding-left: 4px; letter-spacing: -0.15px; }
.head.row span:last-child { border: 0; }
.up { margin: 0 2px 0 auto; border: 4px solid transparent; border-top: 0; border-bottom: 5px solid #9aa0a9; }
.cur { background: #66799b; }
.fill { flex: 1; }
.lpm-foot { height: 22px; display: flex; justify-content: space-between; border-top: 1px solid #272e39; border-bottom: 1px solid #272e39; padding: 4px 3px 0 5px; }
.lpm-foot b { width: 12px; height: 12px; background: #fff; border: 1px solid #222; }
.hscroll { width: 120px; height: 17px; background: #efefef; display: flex; justify-content: flex-end; align-items: center; padding-right: 4px; }
.hscroll svg { width: 7px; height: 8px; }
.lpm-count { padding: 17px 4px; height: 37px; border-bottom: 1px solid #272e39; }
.tip { position: absolute; left: 22px; top: 1169px; width: 356px; height: 79px; padding: 8px 4px 8px 7px; background: #eff0f5; border: 1px solid #767676; color: #4c4c50; line-height: 15px; letter-spacing: -0.4px; z-index: 2; }
.xref { width: 22px; margin: 5px 0 4px 2px; border-top: 1px solid #1f252e; background: #343d4c; position: relative; display: flex; flex-direction: column; align-items: center; }
.xref i { width: 10px; height: 4px; margin-top: 3px; background: repeating-linear-gradient(90deg, #c0c4c8 0 1px, transparent 1px 2px); }
.xref span { margin-top: 556px; writing-mode: vertical-rl; transform: rotate(180deg); color: #f0f0f0; letter-spacing: -0.55px; }

.yaxis { stroke: #15502a; } .xaxis { stroke: #5c1f28; stroke-width: 1.500; }
.minor { stroke: #212933; } .major { stroke: #292f42; }
.wifi { fill: none; stroke: #e6e9e8; stroke-width: 1.300; }
.outer { fill: none; stroke: #e8b2b4; stroke-width: 1.400; }
.wall { fill: none; stroke: #eceef0; stroke-width: 1.500; }
.band { fill: #70767c; stroke: #bcc0c4; stroke-width: 1; }
.thin { fill: #9da2a7; stroke: #e2e4e6; stroke-width: 1; }
.mid { stroke: #eceef0; stroke-width: 1.200; }
.jamb { fill: #30363e; stroke: #d8dbde; stroke-width: 1; }
.labels { font: 300 15px Inter, "Noto Sans", sans-serif; fill: #f0f2f3; text-anchor: middle; letter-spacing: 0; }
.vp { fill: #dfe2e5; font: 12px "Noto Sans", sans-serif; }
.cursor path { fill: none; stroke: #f4f4f4; stroke-width: 1; }
.ucs { font: 300 18px Inter, sans-serif; fill: #f0f0f0; letter-spacing: 0; }
.cube { font: bold 21px "Liberation Sans", sans-serif; fill: #b4b7ba; text-anchor: middle; letter-spacing: 0; }
.ring { fill: none; stroke: #42474f; stroke-width: 12.500; }
.face { fill: #b1b5ba; stroke: #7e8286; } .inner { fill: #a7a7b9; }
.top { font-size: 12px; fill: #45455a; }
.wcs { fill: #a2a3b5; stroke: #83869a; } .wcst { font: 11px "Noto Sans", sans-serif; fill: #494b5c; }
.nav rect { fill: #4c555d; stroke: #5b646c; }

.status { height: 29px; flex: none; display: flex; border-top: 1px solid #2b323d; }
.mtabs { width: 1998px; display: flex; gap: 4px; padding-left: 12px; font-size: 12px; line-height: 15px; color: #a9aeb5; }
.m { height: 18px; background: #29303b; border-radius: 0 0 10px 10px; padding: 0 9px; }
.m.on { background: #343d4c; color: #fff; font-weight: bold; width: 56px; padding-left: 11px; }
.st { display: flex; align-items: flex-start; padding-top: 1px; }
.st > * { height: 23px; background: #343d4c; }
.st > .blue { background: #4a84c0; }
.model { width: 47px; text-align: center; line-height: 23px; }
.ratio { width: 34px; display: flex; align-items: center; gap: 4px; padding-left: 5px; }
```
FILE: plan.js
```js
// Floor plan: a 10 x 10 bay grid, drawn from the bay pitch.
const P = 96.25, X0 = 1142.4, Y0 = 445.3;
const X = k => X0 + P * k, Y = k => Y0 + P * k;
let grid = '', plan = '', labels = '';

for (let k = -16; k <= 33; k++) {
  const x = Math.round(X0 + 41.25 * k - 0.5) + 0.5;
  grid += `<path class="${k % 5 ? 'minor' : 'major'}" d="M${x} 173V1411"/>`;
}
for (let k = 0; k <= 29; k++) {
  const y = Math.round(1407.6 - 41.25 * k - 0.5) + 0.5;
  grid += `<path class="${k % 5 ? 'minor' : 'major'}" d="M446 ${y}H2536"/>`;
}

const rect = (c, x, y, w, h) => { plan += `<rect class="${c}" x="${x}" y="${y}" width="${w}" height="${h}"/>`; };
const line = (c, x1, y1, x2, y2) => { plan += `<path class="${c}" d="M${x1} ${y1}L${x2} ${y2}"/>`; };
const hBand = (x1, x2, y) => { rect('band', x1, y - 2.5, x2 - x1, 5); line('mid', x1, y, x2, y); };
const vBand = (x, y1, y2) => { rect('band', x - 2.5, y1, 5, y2 - y1); line('mid', x, y1, x, y2); };
const vJamb = (x, y) => rect('jamb', x - 2.5, y - 10.5, 4.6, 21);
const hJamb = (x, y) => rect('jamb', x - 10.5, y - 2.5, 21, 4.6);

// Perimeter rooms
for (let r = 1; r <= 9; r++) {
  hBand(X(0), X(1) - 3, Y(r));
  hBand(X(9) + 3, X(10), Y(r));
}
for (let c = 2; c <= 8; c++) {
  vBand(X(c), Y(0), Y(1) - 3);
  vBand(X(c), Y(9) + 3, Y(10));
}
for (const r of [1, 9]) rect('thin', X(1), Y(r) - 1.2, X(9) - X(1), 2.4);
for (const c of [1, 9]) line('wall', X(c), Y(0), X(c), Y(10));
for (const c of [4, 6]) line('wall', X(c), Y(1), X(c), Y(9));
for (let r = 1; r <= 9; r++) { vJamb(X(1), Y(r)); vJamb(X(9) + 1, Y(r)); }
for (let c = 2; c <= 8; c++) { hJamb(X(c), Y(1)); hJamb(X(c), Y(9) + 1); }

// Two inner blocks
for (const c of [2, 6]) {
  const l = X(c), m = X(c + 1), r = X(c + 2);
  line('wall', l, Y(2), l, Y(8));
  line('wall', r, Y(2), r, Y(8));
  line('wall', l, Y(8), r, Y(8));
  line('wall', m, Y(4), m, Y(5));
  line('wall', m, Y(7), m, Y(8));
  vBand(m, Y(2), Y(4));
  vBand(m, Y(5), Y(7));
  for (const [row, dy] of [[2, -1], [4, -3], [5, -1], [7, -3]]) {
    rect('jamb', l - 1.500, Y(row) + dy, r - l + 3, 4);
    line('mid', l, Y(row) + (dy === -1 ? 0 : 0.5), r, Y(row) + (dy === -1 ? 0 : 0.5));
  }
  for (const row of [3, 6]) {
    hBand(l + 2, r - 2, Y(row));
    vJamb(l + 1, Y(row));
    vJamb(r - 0.5, Y(row));
  }
}
plan += `<rect class="outer" x="${X(0)}" y="${Y(0)}" width="${10 * P}" height="${10 * P}"/>`;

// Room labels: text, centre x, centre y in drawing units (1 unit = 1.6327 px)
const rooms = `101 727 298,102 787.5 297,103 849.5 295.5,104 904.500 295.5,105 964.5 295.5,106 1025 295,107 1084 295,108 1141.5 294.500,109 1201 295,110 1260 296,
111 728 352.500,112 1260.5 351.500,113 728 411,114 1258.500 410.5,115 727 472.5,116 1259.500 472,117 725.5 529.5,118 1257.500 527,119 725.5 588.5,120 1259 586.5,
121 727 646,122 1257.5 647,123 726.5 706.5,124 1258 704,125 725.5 766.5,126 1258.5 762,127 727.500 822.5,128 787 822.5,129 848 821.5,130 910.5 820.5,131 967.500 820,
132 1023.500 822,133 1083 822.5,134 1141.500 822,135 1201.500 822,136 1258.500 823,136 846.500 408.5,137 907 408.5,138 847.5 470,139 905.5 470.500,140 848 529.5,141 905 527.5,
142 848 588.5,143 906 587.5,144 848 645.500,145 906.500 647.5,146 847 706.5,147 908 704.5,148 1082.500 409.5,149 1141.500 410,150 1081.500 469,151 1141.5 471,
152 1083.500 527,153 1141.5 527.5,154 1084.500 587.5,155 1141.5 587.5,156 1084 645,157 1141.5 645.500,Wifi101 650.500 266.500,CIRC101 994 608,CIRC102 841 777,CIRC103 1146.500 777,ELV101 1091 703,STR101 1142 705`;
for (const item of rooms.split(',')) {
  const [name, x, y] = item.trim().split(' ');
  const w = { Wifi101: 50, CIRC101: 59, CIRC102: 59, CIRC103: 59, ELV101: 52, STR101: 52 }[name] || 26;
  labels += `<text x="${(x * 1.6327 + 0.6).toFixed(1)}" y="${(y * 1.6327 + 5.3).toFixed(1)}" textLength="${w}">${name}</text>`;
}
document.getElementById('grid').innerHTML = grid;
document.getElementById('plan').innerHTML = plan;
document.getElementById('labels').innerHTML = labels;
```
